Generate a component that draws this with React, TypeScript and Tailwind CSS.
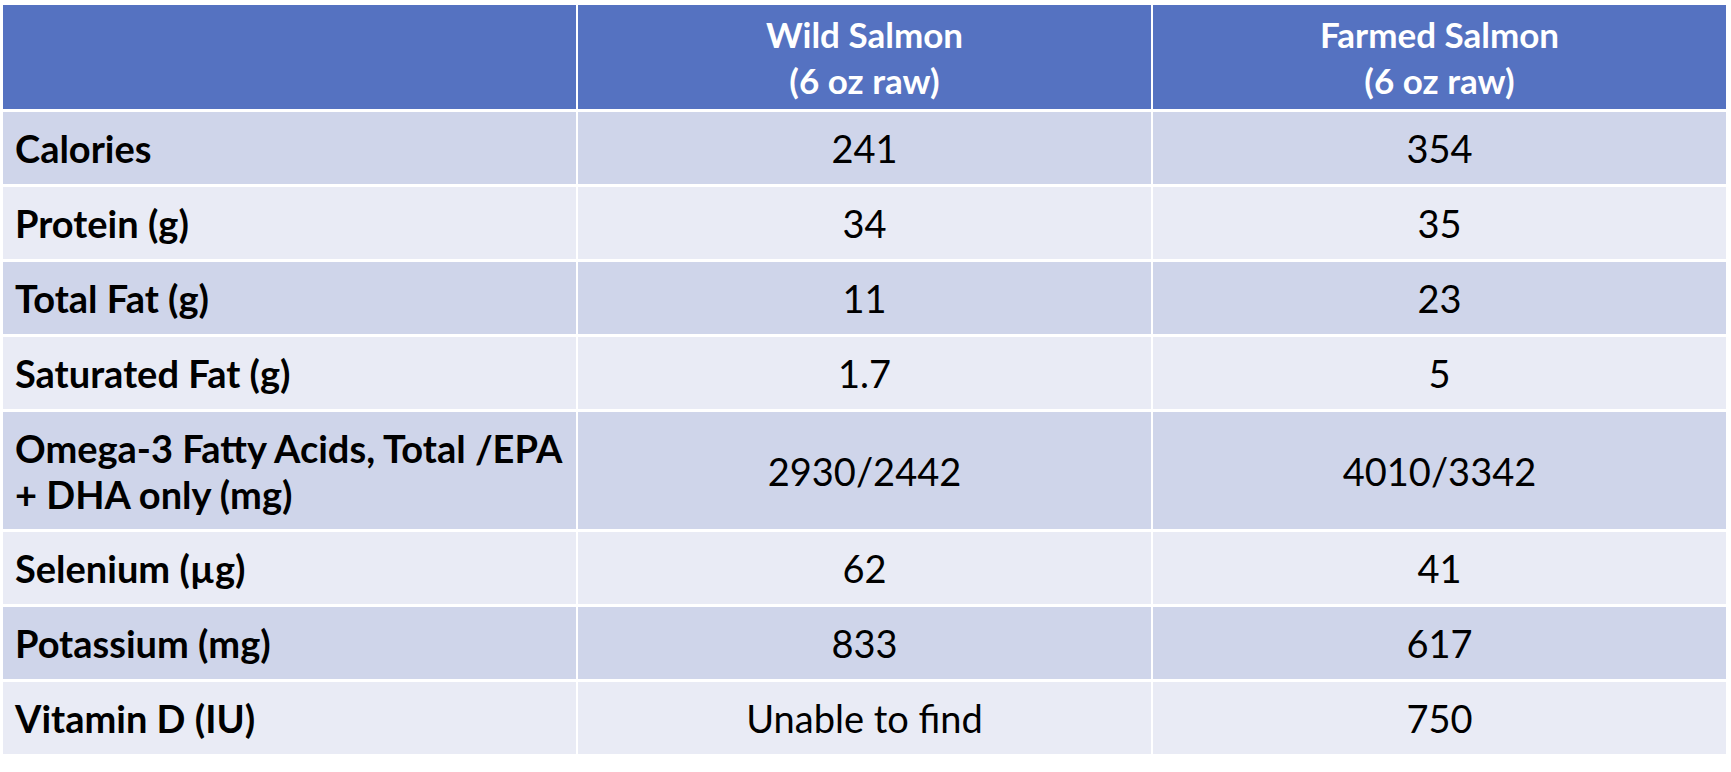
const rows: { label: string[]; wild: string; farmed: string; tall?: boolean }[] = [
  { label: ["Calories"], wild: "241", farmed: "354" },
  { label: ["Protein (g)"], wild: "34", farmed: "35" },
  { label: ["Total Fat (g)"], wild: "11", farmed: "23" },
  { label: ["Saturated Fat (g)"], wild: "1.7", farmed: "5" },
  {
    label: ["Omega-3 Fatty Acids, Total /EPA", "+ DHA only (mg)"],
    wild: "2930/2442",
    farmed: "4010/3342",
    tall: true,
  },
  { label: ["Selenium (µg)"], wild: "62", farmed: "41" },
  { label: ["Potassium (mg)"], wild: "833", farmed: "617" },
  { label: ["Vitamin D (IU)"], wild: "Unable to find", farmed: "750" },
];

export default function App() {
  return (
    <div className="h-[772px] w-[1731px] bg-white pl-[3px] pt-[5px] font-['Lato',sans-serif] text-[38px] leading-[46px]">
      <div className="grid w-[1723px] grid-cols-[573px_573px_573px] gap-x-[2px] gap-y-[3px]">
        {/* header */}
        <div className="h-[104px] bg-[#5572c1]" />
        <div className="flex h-[104px] flex-col items-center justify-center bg-[#5572c1] text-[35px] font-bold leading-[46px] text-white">
          <span>Wild Salmon</span>
          <span>(6 oz raw)</span>
        </div>
        <div className="flex h-[104px] flex-col items-center justify-center bg-[#5572c1] text-[35px] font-bold leading-[46px] text-white">
          <span>Farmed Salmon</span>
          <span>(6 oz raw)</span>
        </div>

        {rows.map((r, i) => {
          const bg = i % 2 === 0 ? "bg-[#cfd5ea]" : "bg-[#e9ebf5]";
          const h = r.tall ? "h-[117px]" : "h-[72px]";
          return [
            <div
              key={`l${i}`}
              className={`${bg} ${h} flex flex-col justify-center pl-[12px] font-bold text-black`}
            >
              {r.label.map((t) => (
                <span key={t} className="whitespace-nowrap">
                  {t}
                </span>
              ))}
            </div>,
            <div key={`w${i}`} className={`${bg} ${h} flex items-center justify-center text-black`}>
              {r.wild}
            </div>,
            <div key={`f${i}`} className={`${bg} ${h} flex items-center justify-center text-black`}>
              {r.farmed}
            </div>,
          ];
        })}
      </div>
    </div>
  );
}
